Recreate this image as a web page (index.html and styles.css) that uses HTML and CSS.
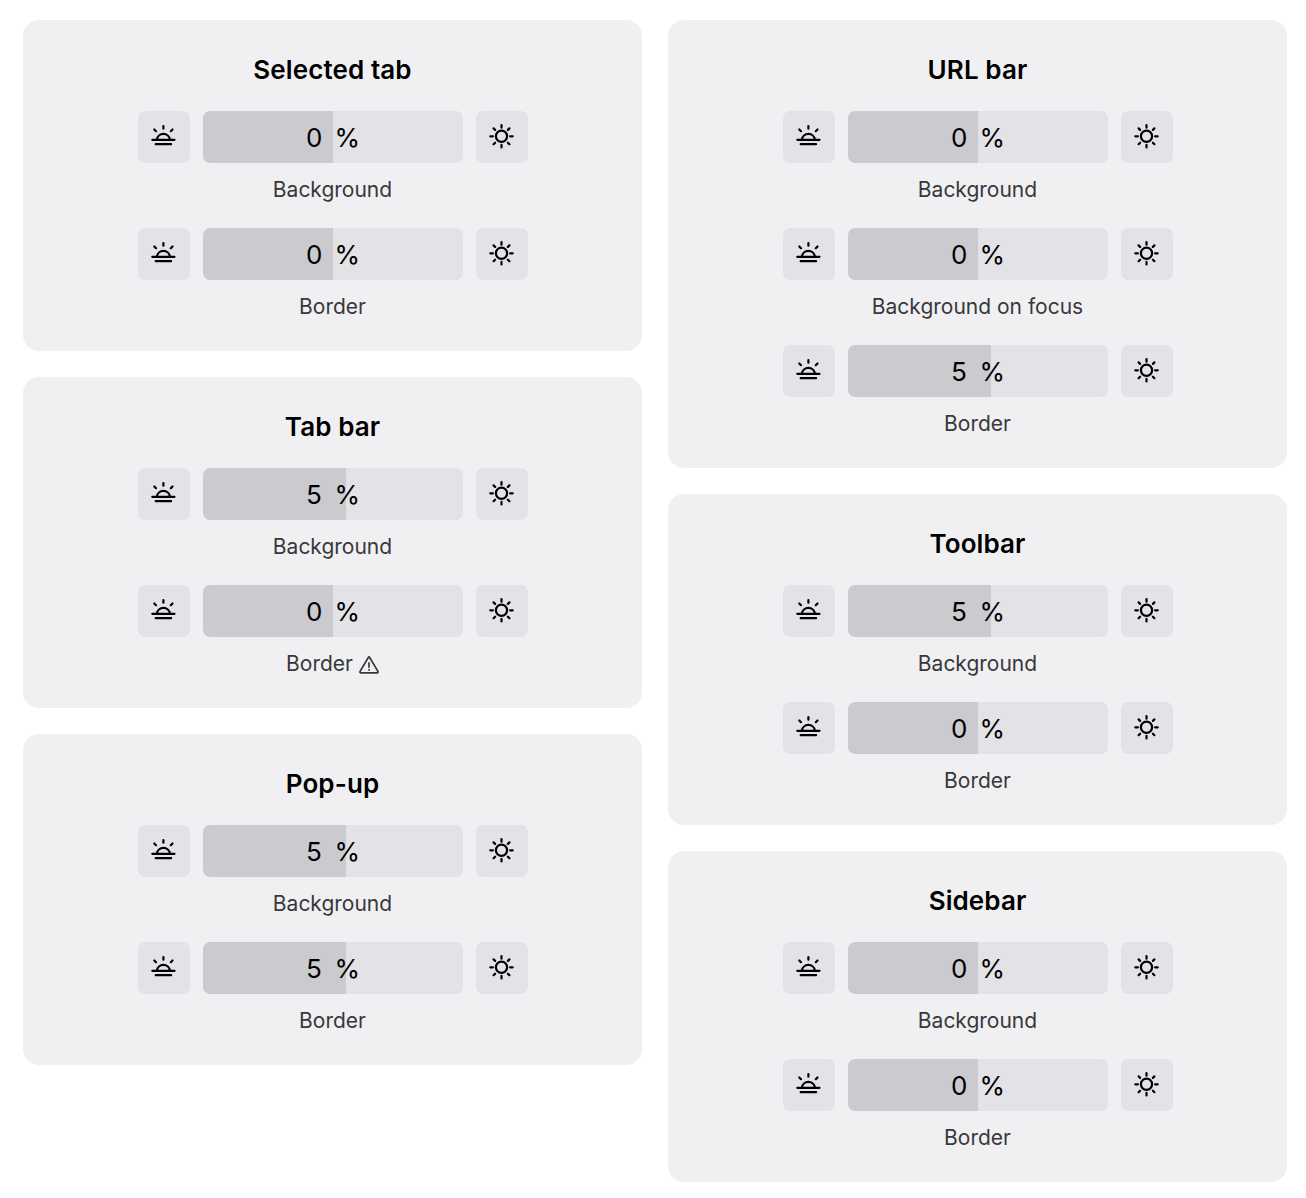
FILE: index.html
```html
<!DOCTYPE html>
<html lang="en">
<head>
<meta charset="utf-8">
<title>Theme builder</title>
<link rel="stylesheet" href="styles.css">
</head>
<body>
<svg class="defs" width="0" height="0" aria-hidden="true">
  <symbol id="dim" viewBox="-0.5 0 26 26"><path d="M1.8 16.8h22.2M5.2 21.2h15.4M6.4 16.5a6.55 6.4 0 0 1 13 0M12.9 3.1v2.6M3.8 6.5l1.7 1.7M22 6.5l-1.7 1.7"/></symbol>
  <symbol id="sun" viewBox="-0.5 -0.3 26 26"><circle cx="13" cy="13" r="5.6"/><path d="M13 1.8v2.6M13 21.6v2.6M1.8 13h2.6M21.6 13h2.6M5.1 5.1l1.5 1.5M19.4 19.4l1.5 1.5M5.1 20.9l1.5-1.5M19.4 6.6l1.5-1.5"/></symbol>
  <symbol id="warn" viewBox="0 0 20 18"><path d="M9.3 1.5Q10 .4 10.7 1.5L18.9 15.4Q19.5 16.8 18.2 16.8H1.8Q.5 16.8 1.1 15.4ZM10 6.9v4.2M10 13.5v.5"/></symbol>
</svg>
<main class="page" id="page"></main>
<script src="app.js"></script>
</body>
</html>
```
FILE: styles.css
```css
body {
  margin: 0;
  background: #fff;
  color: #000;
  font-family: Inter, sans-serif;
}
.defs { position: absolute; }
.page {
  display: flex;
  gap: 26px;
  padding: 20px 19px 16px 23px;
  align-items: flex-start;
}
.column {
  flex: 1;
  display: flex;
  flex-direction: column;
  gap: 26px;
}
.card {
  background: #f0f0f3;
  border-radius: 16px;
  padding: 34px 0 32px;
  display: flex;
  flex-direction: column;
  align-items: center;
  gap: 26px;
}
.title {
  margin: 0 0 -1px;
  font-size: 26px;
  line-height: 32px;
  font-weight: 600;
  letter-spacing: 0.1px;
}
.control { display: flex; gap: 13px; }
.button {
  box-sizing: border-box;
  width: 52px;
  height: 52px;
  border: 0;
  padding: 0 2px 2px 0;
  border-radius: 7px;
  background: #e3e2e7;
  display: flex;
  align-items: center;
  justify-content: center;
}
.icon {
  width: 26px;
  height: 26px;
  fill: none;
  stroke: #000;
  stroke-width: 2.2;
  stroke-linecap: round;
}
.slider {
  width: 260px;
  height: 52px;
  border-radius: 7px;
  font-size: 26px;
  line-height: 54px;
  display: flex;
  background: linear-gradient(#cbcacf, #cbcacf) 0 0 / var(--fill) 100% no-repeat #e3e2e7;
}
.number {
  width: 120px;
  text-align: right;
  font-variant-numeric: tabular-nums;
}
.percent { margin-left: 12px; }
.label {
  display: flex;
  justify-content: center;
  align-items: center;
  gap: 6px;
  height: 39px;
  padding-top: 7px;
  box-sizing: border-box;
  margin-top: 4px;
  margin-bottom: -4px;
  font-size: 21px;
  line-height: 32px;
  color: #38383a;
}
.warning {
  width: 20px;
  height: 18px;
  margin-top: 2px;
  fill: none;
  stroke: #38383a;
  stroke-width: 1.7;
  stroke-linecap: round;
}
```
FILE: app.js
```js
const columns = [
  [
    ["Selected tab", [["Background", 0], ["Border", 0]]],
    ["Tab bar", [["Background", 5], ["Border", 0, true]]],
    ["Pop-up", [["Background", 5], ["Border", 5]]],
  ],
  [
    ["URL bar", [["Background", 0], ["Background on focus", 0], ["Border", 5]]],
    ["Toolbar", [["Background", 5], ["Border", 0]]],
    ["Sidebar", [["Background", 0], ["Border", 0]]],
  ],
];

const button = (id, name) =>
  `<button class="button" aria-label="${name}"><svg class="icon"><use href="#${id}"/></svg></button>`;

const setting = ([label, value, warning]) => `
  <div class="setting">
    <div class="control">
      ${button("dim", "Darker")}
      <div class="slider" style="--fill:${50 + value}%"><span class="number">${value}</span><span class="percent">%</span></div>
      ${button("sun", "Brighter")}
    </div>
    <div class="label"><span>${label}</span>${warning ? '<svg class="warning"><use href="#warn"/></svg>' : ""}</div>
  </div>`;

const card = ([title, settings]) =>
  `<section class="card"><h2 class="title">${title}</h2>${settings.map(setting).join("")}</section>`;

document.getElementById("page").innerHTML = columns
  .map((cards) => `<div class="column">${cards.map(card).join("")}</div>`)
  .join("");
```
